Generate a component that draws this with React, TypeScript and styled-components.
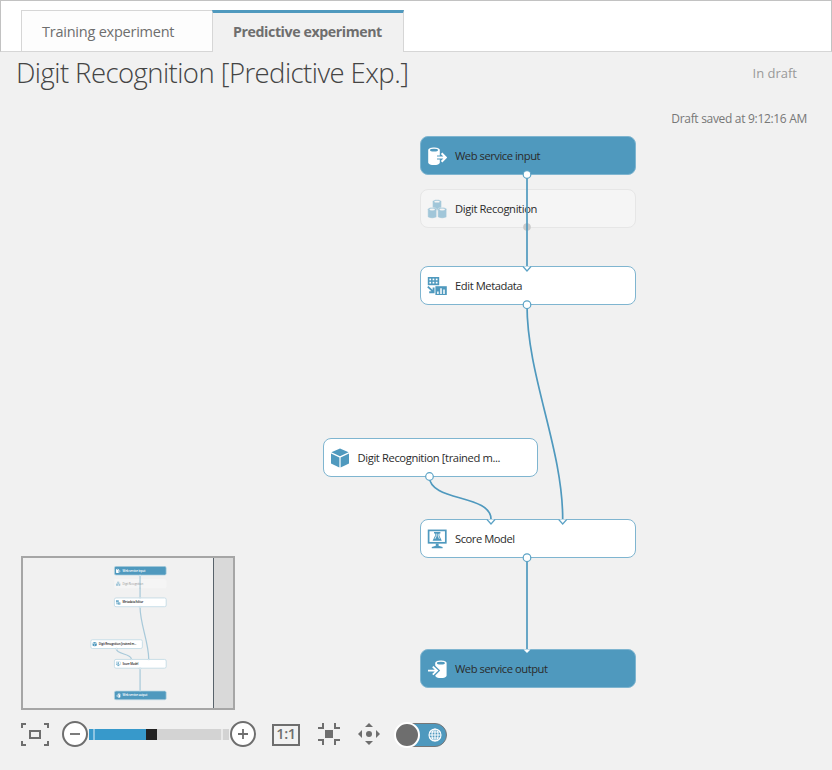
import React from "react";
import styled, { createGlobalStyle, css } from "styled-components";

const BLUE = "#4f99be";
const EDGE = "#5ba2c5";
const INK = "#6e6e6e";

const GlobalStyle = createGlobalStyle`
  body {
    margin: 0;
    background: #f1f1f1;
    font-family: "Open Sans", "Noto Sans", sans-serif;
  }
`;

const Page = styled.div`
  box-sizing: border-box;
  width: 832px;
  height: 770px;
  display: flex;
  flex-direction: column;
  overflow: hidden;
  background: #f1f1f1;
`;

const TabBar = styled.nav`
  box-sizing: border-box;
  flex: none;
  height: 52px;
  display: flex;
  align-items: flex-end;
  padding-left: 20px;
  background: #fff;
  border: 1px solid #c2c2c2;
  border-bottom-color: #d6d6d6;
`;

const Tab = styled.button<{ $active?: boolean }>`
  box-sizing: border-box;
  height: 41px;
  width: 191px;
  margin: 0;
  padding: 1px 0 0 20px;
  border: 1px solid #d6d6d6;
  border-bottom: 0;
  border-right: 0;
  background: #fdfdfd;
  color: ${INK};
  font-family: inherit;
  font-size: 14.5px;
  letter-spacing: -0.23px;
  text-align: left;
  white-space: nowrap;
  ${(p) =>
    p.$active &&
    css`
      width: 192px;
      height: 42px;
      padding-top: 0;
      padding-bottom: 2px;
      margin-bottom: -1px;
      border-right: 1px solid #d6d6d6;
      border-top: 3px solid ${BLUE};
      background: #f1f1f1;
      font-weight: 700;
      font-size: 14.2px;
      letter-spacing: -0.41px;
    `}
`;

const Heading = styled.header`
  flex: none;
  height: 84px;
  display: flex;
  justify-content: space-between;
`;

const Title = styled.h1`
  margin: 1px 0 0 16px;
  font-size: 27.5px;
  letter-spacing: -0.56px;
  line-height: 40px;
  font-weight: 300;
  color: #444;
  white-space: nowrap;
`;

const Status = styled.div`
  display: flex;
  flex-direction: column;
  align-items: flex-end;
  padding: 11px 25px 0 0;
  white-space: nowrap;
`;

const DraftState = styled.span`
  margin-right: 10px;
  font-size: 13px;
  line-height: 20px;
  color: #999;
`;

const SavedAt = styled.span`
  margin-top: 27px;
  font-size: 12px;
  letter-spacing: -0.31px;
  line-height: 18px;
  color: #777;
`;

const Workspace = styled.main`
  position: relative;
  flex: 1;
`;

const Graph = styled.div<{ $mini?: boolean }>`
  position: absolute;
  left: 0;
  top: 0;
  width: 832px;
  height: 634px;
  ${(p) =>
    p.$mini &&
    css`
      left: -11.3px;
      top: 8.1px;
      transform: scale(0.243);
      transform-origin: 0 0;
    `}
`;

type Kind = "solid" | "plain" | "ghost";

const NodeBox = styled.div<{ $x: number; $y: number; $kind: Kind; $mini?: boolean }>`
  position: absolute;
  left: ${(p) => p.$x}px;
  top: ${(p) => p.$y}px;
  box-sizing: border-box;
  width: 215.5px;
  height: 39px;
  display: flex;
  align-items: center;
  gap: 8px;
  padding: 1px 0 0 6px;
  border: 1.4px solid #7fb5d0;
  border-radius: 8px;
  background: #fff;
  ${(p) => p.$kind === "solid" && css`background: ${BLUE};`}
  ${(p) =>
    p.$kind === "ghost" &&
    css`
      background: #f5f5f5;
      border-color: #e6e6e6;
    `}
  ${(p) =>
    p.$mini &&
    css`
      border-width: 3px;
      padding-left: 4px;
      border-color: ${p.$kind === "ghost" ? "#f5f5f5" : "#b9d5e2"};
    `}
`;

const NodeIcon = styled.svg<{ $faded?: boolean }>`
  flex: none;
  width: 20px;
  height: 20px;
  display: block;
  opacity: ${(p) => (p.$faded ? 0.5 : 1)};
`;

const NodeLabel = styled.span<{ $spacing: number; $mini?: boolean; $kind: Kind }>`
  font-size: 11.2px;
  line-height: 16px;
  letter-spacing: ${(p) => p.$spacing}px;
  color: #2b2b2b;
  white-space: nowrap;
  ${(p) =>
    p.$mini &&
    css`
      font-size: 12px;
      letter-spacing: -0.6px;
      font-weight: ${p.$kind === "ghost" ? 400 : 600};
      color: ${p.$kind === "solid" ? "#fff" : p.$kind === "ghost" ? "#999" : "#222"};
    `}
`;

const Wires = styled.svg<{ $mini?: boolean }>`
  position: absolute;
  inset: 0;
  pointer-events: none;
  opacity: ${(p) => (p.$mini ? 0.45 : 1)};
`;

const Overlay = styled.aside`
  position: absolute;
  left: 21px;
  bottom: 22px;
  display: flex;
  flex-direction: column;
  gap: 11px;
`;

const MiniMap = styled.div`
  position: relative;
  box-sizing: border-box;
  width: 214px;
  height: 154px;
  display: flex;
  justify-content: flex-end;
  overflow: hidden;
  border: 2px solid #a6a6a6;
  background: #f1f1f1;
`;

const MiniOutside = styled.div`
  width: 19px;
  background: #d9d9d9;
  border-left: 1px solid #59636b;
`;

const Toolbar = styled.div`
  display: flex;
  align-items: center;
  height: 27px;
`;

const IconButton = styled.button<{ $w: number; $ml?: number }>`
  flex: none;
  width: ${(p) => p.$w}px;
  height: 27px;
  margin: 0 0 0 ${(p) => p.$ml ?? 0}px;
  padding: 0;
  border: 0;
  background: none;
  svg {
    display: block;
  }
`;

const Slider = styled.div`
  display: flex;
  width: 140px;
  height: 11px;
  margin: 0 1px;
  background: #d3d3d3;
`;

const Segment = styled.span<{ $w: number; $c: string }>`
  width: ${(p) => p.$w}px;
  background: ${(p) => p.$c};
`;

const ActualSize = styled.button`
  box-sizing: border-box;
  width: 28px;
  height: 22px;
  margin: 0 0 0 16px;
  padding: 0 0 2px;
  border: 2px solid ${INK};
  background: transparent;
  color: ${INK};
  font: 600 14.5px/16px "Open Sans", sans-serif;
  letter-spacing: -0.4px;
  text-align: center;
`;

const Toggle = styled.div`
  box-sizing: border-box;
  width: 51px;
  height: 24px;
  margin-left: 16px;
  display: flex;
  align-items: center;
  justify-content: space-between;
  padding-right: 4px;
  border: 1px solid #777;
  border-radius: 12px;
  background: ${BLUE};
`;

const Knob = styled.span`
  flex: none;
  box-sizing: border-box;
  width: 26px;
  height: 26px;
  margin-left: -3px;
  border: 2px solid #fff;
  border-radius: 50%;
  background: ${INK};
`;

type IconName = "input" | "output" | "stack" | "metadata" | "cube" | "score";

function Glyph({ name }: { name: IconName }) {
  switch (name) {
    case "input":
      return (
        <NodeIcon viewBox="0 0 20 20">
          <path d="M1.2 4C1.2 .6 12.8 .6 12.8 4V16.4C12.8 19.8 1.2 19.8 1.2 16.4Z" fill="#fff" />
          <ellipse cx="7" cy="4.2" rx="4" ry="1.4" fill={BLUE} />
          <path d="M10 11.5H17.5M14.4 7.3L18.6 11.5L14.4 15.7" fill="none" stroke={BLUE} strokeWidth="4" />
          <path d="M10 11.5H18.6M14.6 7.3L18.8 11.5L14.6 15.7" fill="none" stroke="#fff" strokeWidth="2.1" />
        </NodeIcon>
      );
    case "output":
      return (
        <NodeIcon viewBox="0 0 20 20">
          <path d="M8.2 4C8.2 .6 19.6 .6 19.6 4V16.4C19.6 19.8 8.2 19.8 8.2 16.4Z" fill="#fff" />
          <ellipse cx="13.9" cy="4.2" rx="4" ry="1.4" fill={BLUE} />
          <path d="M1 11.6H9M6 7.4L10.2 11.6L6 15.8" fill="none" stroke={BLUE} strokeWidth="4.2" />
          <path d="M1 11.6H9.6M5.8 7.6L10 11.6L5.8 15.6" fill="none" stroke="#fff" strokeWidth="1.9" />
        </NodeIcon>
      );
    case "stack":
      return (
        <NodeIcon viewBox="0 0 20 20" $faded>
          {[
            [5.6, 0.4],
            [0.8, 8.2],
            [10.8, 8.2],
          ].map(([x, y]) => (
            <g key={`${x}-${y}`} transform={`translate(${x} ${y})`}>
              <path d="M0 2C0-.2 8.8-.2 8.8 2V9.4C8.8 11.6 0 11.6 0 9.4Z" fill={BLUE} stroke="#f5f5f5" strokeWidth=".4" />
              <ellipse cx="4.4" cy="2.3" rx="2.8" ry=".9" fill="#f5f5f5" />
            </g>
          ))}
        </NodeIcon>
      );
    case "metadata":
      return (
        <NodeIcon viewBox="0 0 20 20">
          <path d="M.8 1H12.2V9.2H.8Z" fill={BLUE} />
          {[2.4, 5.6, 8.8].map((x) =>
            [2.6, 5.8].map((y) => <rect key={`${x}-${y}`} x={x} y={y} width="1.7" height="1.7" fill="#fff" />)
          )}
          <path d="M.8 10.6L6.2 15.6M6.6 11.4V16.2H2.2" fill="none" stroke={BLUE} strokeWidth="1.9" />
          <rect x="8.4" y="10.2" width="11.4" height="8.8" fill={BLUE} />
          <path d="M10.9 18V15.4M14 18V12.2M17 18V13.6" stroke="#fff" strokeWidth="1.5" />
        </NodeIcon>
      );
    case "cube":
      return (
        <NodeIcon viewBox="0 0 20 20">
          <path d="M10 .6L18.6 4.3L10 8.2L1.4 4.3Z" fill={BLUE} />
          <path d="M1 5.6L9.4 9.4V19.6L1 15.4Z" fill={BLUE} />
          <path d="M19 5.6L10.6 9.4V19.6L19 15.4Z" fill={BLUE} />
        </NodeIcon>
      );
    case "score":
      return (
        <NodeIcon viewBox="0 0 20 20">
          <rect x="1.6" y="1.4" width="17.2" height="12.4" fill="none" stroke={BLUE} strokeWidth="1.7" />
          <path d="M8.8 14.6H11.6V16.8L15.6 18V19.2H4.8V18L8.8 16.8Z" fill={BLUE} />
          <path d="M7 3H13.4V4.4H12.4V6.8L14.8 11.8H5.6L8 6.8V4.4H7Z" fill={BLUE} />
          <path d="M9.2 4.6V7.2L8 9.8M11.2 4.8V7L12.4 9.8" fill="none" stroke="#fff" strokeWidth=".8" />
        </NodeIcon>
      );
  }
}

interface NodeSpec {
  x: number;
  y: number;
  kind: Kind;
  icon: IconName;
  label: string;
  spacing: number;
  miniLabel?: string;
}

// Node coordinates are relative to the workspace, which starts below the heading.
const nodes: NodeSpec[] = [
  { x: 420, y: 0, kind: "solid", icon: "input", label: "Web service input", spacing: -0.46 },
  { x: 420, y: 53, kind: "ghost", icon: "stack", label: "Digit Recognition", spacing: -0.36 },
  { x: 420, y: 130, kind: "plain", icon: "metadata", label: "Edit Metadata", spacing: -0.42, miniLabel: "Metadata Editor" },
  { x: 322.5, y: 302, kind: "plain", icon: "cube", label: "Digit Recognition [trained m...", spacing: -0.38 },
  { x: 420, y: 383, kind: "plain", icon: "score", label: "Score Model", spacing: -0.46 },
  { x: 420, y: 513, kind: "solid", icon: "output", label: "Web service output", spacing: -0.46 },
];

function Experiment({ mini }: { mini?: boolean }) {
  return (
    <Graph $mini={mini}>
      {nodes.map((n) => (
        <NodeBox key={n.icon} $x={n.x} $y={n.y} $kind={n.kind} $mini={mini}>
          <Glyph name={n.icon} />
          <NodeLabel $spacing={n.spacing} $kind={n.kind} $mini={mini}>
            {mini && n.miniLabel ? n.miniLabel : n.label}
          </NodeLabel>
        </NodeBox>
      ))}
      <Wires width="832" height="634" $mini={mini}>
        <circle cx="527" cy="91" r="3.8" fill="#c9c9c9" />
        <g fill="none" stroke={BLUE} strokeWidth={mini ? 5 : 1.7}>
          <path d="M527 39V130" />
          <path d="M527 169C527 240 562.7 312 562.7 383" />
          <path d="M429.5 341C429.5 365.5 491 358.5 491 383" />
          <path d="M527 422V513" />
        </g>
        <g fill="#fff" stroke={EDGE} strokeWidth="1.2">
          <path d="M523 130.5L527 135L531 130.5" />
          <path d="M487 383.5L491 388L495 383.5" />
          <path d="M558.7 383.5L562.7 388L566.7 383.5" />
          <path d="M523.5 513.5H530.5L527 517Z" stroke="none" />
          <circle cx="527" cy="38.5" r="3.8" />
          <circle cx="527" cy="168.7" r="3.8" />
          <circle cx="429.5" cy="340.5" r="3.8" />
          <circle cx="527" cy="421.7" r="3.8" />
        </g>
      </Wires>
    </Graph>
  );
}

function RoundIcon({ plus }: { plus?: boolean }) {
  return (
    <svg width="26" height="27" viewBox="0 0 26 27">
      <circle cx="13" cy="13" r="12" fill="#fff" stroke={INK} strokeWidth="2" />
      <path d={plus ? "M8 13H18M13 8V18" : "M8 13H18"} stroke={INK} strokeWidth="1.8" />
    </svg>
  );
}

export default function App() {
  return (
    <Page>
      <GlobalStyle />
      <TabBar>
        <Tab>Training experiment</Tab>
        <Tab $active>Predictive experiment</Tab>
      </TabBar>
      <Heading>
        <Title>Digit Recognition [Predictive Exp.]</Title>
        <Status>
          <DraftState>In draft</DraftState>
          <SavedAt>Draft saved at 9:12:16 AM</SavedAt>
        </Status>
      </Heading>
      <Workspace>
        <Experiment />
        <Overlay>
          <MiniMap>
            <MiniOutside />
            <Experiment mini />
          </MiniMap>
          <Toolbar>
            <IconButton $w={28} aria-label="Zoom to fit">
              <svg width="28" height="27" viewBox="0 0 28 27" fill="none" stroke={INK} strokeWidth="2">
                <path d="M1 7V3H5M23 3H27V7M27 20V24H23M5 24H1V20" />
                <rect x="9" y="10" width="10" height="7" />
              </svg>
            </IconButton>
            <IconButton $w={26} $ml={13} aria-label="Zoom out">
              <RoundIcon />
            </IconButton>
            <Slider>
              <Segment $w={4} $c="#3799cb" />
              <Segment $w={2} $c="#8cc4e2" />
              <Segment $w={51} $c="#3799cb" />
              <Segment $w={11} $c="#222" />
              <Segment $w={64} $c="#d3d3d3" />
              <Segment $w={2} $c="#e9e9e9" />
            </Slider>
            <IconButton $w={26} aria-label="Zoom in">
              <RoundIcon plus />
            </IconButton>
            <ActualSize>1:1</ActualSize>
            <IconButton $w={22} $ml={18} aria-label="Collapse">
              <svg width="22" height="27" viewBox="0 0 22 27">
                <rect x="7" y="9" width="8" height="8" fill={INK} />
                <path d="M0 7H5V2M17 2V7H22M22 19H17V24M5 24V19H0" fill="none" stroke={INK} strokeWidth="2" />
              </svg>
            </IconButton>
            <IconButton $w={22} $ml={18} aria-label="Pan">
              <svg width="22" height="27" viewBox="0 0 22 27" fill={INK}>
                <circle cx="11" cy="13" r="3" />
                <path d="M11 2L15 6H7ZM11 24L7 20H15ZM0 13L4 9V17ZM22 13L18 9V17Z" />
              </svg>
            </IconButton>
            <Toggle>
              <Knob />
              <svg width="14" height="14" viewBox="0 0 14 14" fill="none" stroke="#fff" strokeWidth="1.1">
                <circle cx="7" cy="7" r="6" />
                <ellipse cx="7" cy="7" rx="3" ry="6" />
                <path d="M7 1V13M1 7H13M1.8 4H12.2M1.8 10H12.2" />
              </svg>
            </Toggle>
          </Toolbar>
        </Overlay>
      </Workspace>
    </Page>
  );
}
